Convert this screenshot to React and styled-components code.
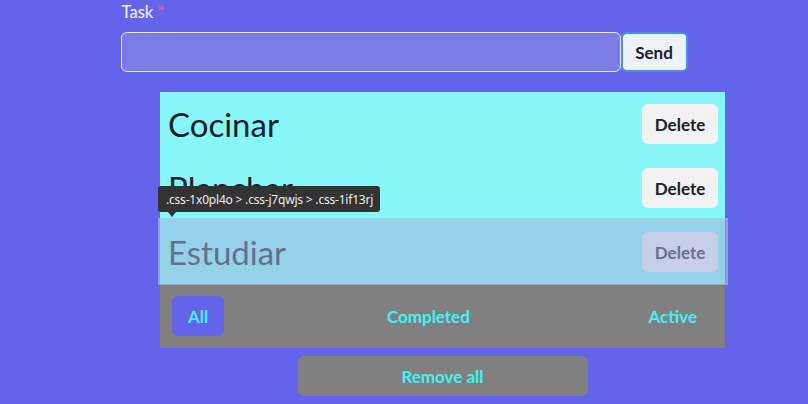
import React from "react";
import styled, { createGlobalStyle } from "styled-components";

const colors = {
  bg: "#6464ea",
  list: "#87f7f7",
  gray: "#808080",
  cyanText: "#40f4f4",
  dark: "#1a202c",
  light: "#f2f2f2"
};

const GlobalStyle = createGlobalStyle`
  html, body {
    margin: 0;
    padding: 0;
    background: ${colors.bg};
    font-family: Lato, "Open Sans", sans-serif;
  }
  #root {
    min-height: 404px;
  }
`;

const tasks = [
  { id: 1, name: "Cocinar" },
  { id: 2, name: "Planchar" },
  { id: 3, name: "Estudiar", inspected: true }
];

export default function App() {
  return (
    <>
      <GlobalStyle />
      <Page>
        <Form>
          <Label>
            Task <Required>*</Required>
          </Label>
          <InputRow>
            <TaskInput />
            <SendButton>Send</SendButton>
          </InputRow>
        </Form>
        <Section>
          <List>
            {tasks.map(task => (
              <Row key={task.id}>
                <TaskName>{task.name}</TaskName>
                <DeleteButton>Delete</DeleteButton>
                {task.inspected && (
                  <>
                    <Highlight />
                    <Tooltip>.css-1x0pl4o &gt; .css-j7qwjs &gt; .css-1if13rj</Tooltip>
                  </>
                )}
              </Row>
            ))}
          </List>
          <FilterBar>
            <FilterButton active>All</FilterButton>
            <FilterButton>Completed</FilterButton>
            <FilterButton>Active</FilterButton>
          </FilterBar>
          <RemoveAll>Remove all</RemoveAll>
        </Section>
      </Page>
    </>
  );
}

const Page = styled.div`
  display: flex;
  flex-direction: column;
  width: 808px;
  height: 404px;
  overflow: hidden;
`;

const Form = styled.div`
  width: 567px;
  margin: 0 auto;
  display: flex;
  flex-direction: column;
`;

const Label = styled.label`
  color: #eef0fb;
  font-size: 16.5px;
  font-weight: 500;
  line-height: 24px;
  padding-left: 1px;
  margin-bottom: 8px;
`;

const Required = styled.span`
  color: #f0609a;
`;

const InputRow = styled.div`
  display: flex;
  height: 40px;
`;

const TaskInput = styled.input`
  flex: 1;
  box-sizing: border-box;
  height: 40px;
  border: 1px solid #e6e8fa;
  border-radius: 6px;
  background: #7a7be4;
  outline: none;
`;

const SendButton = styled.button`
  box-sizing: border-box;
  width: 67px;
  height: 40px;
  border: 2px solid #4a8fe4;
  border-radius: 6px;
  background: #edf2f7;
  color: ${colors.dark};
  font-family: Lato, sans-serif;
  font-size: 17px;
  font-weight: 700;
  padding: 0;
`;

const Section = styled.div`
  width: 565px;
  padding-left: 160px;
  margin-top: 20px;
  display: flex;
  flex-direction: column;
`;

const List = styled.div`
  background: ${colors.list};
  display: flex;
  flex-direction: column;
`;

const Row = styled.div`
  position: relative;
  height: 64px;
  display: flex;
  align-items: center;
  justify-content: space-between;
  padding: 0 7px 0 8px;
`;

const TaskName = styled.span`
  font-size: 33px;
  font-weight: 400;
  color: ${colors.dark};
`;

const DeleteButton = styled.button`
  width: 76px;
  height: 40px;
  border: none;
  border-radius: 6px;
  background: ${colors.light};
  color: ${colors.dark};
  font-family: Lato, sans-serif;
  font-size: 17px;
  font-weight: 700;
  padding: 0;
`;

const Highlight = styled.div`
  position: absolute;
  top: -2px;
  bottom: -1px;
  left: -2px;
  right: -3px;
  background: rgba(160, 178, 222, 0.55);
  box-shadow: inset 0 0 0 2px rgba(190, 205, 235, 0.25);
`;

const Tooltip = styled.div`
  position: absolute;
  left: -2px;
  top: -34px;
  height: 26px;
  padding: 0 7px 0 8px;
  display: flex;
  align-items: center;
  background: #333333;
  color: #f0f0f0;
  border-radius: 3px;
  font-family: "Noto Sans", sans-serif;
  font-size: 12px;
  letter-spacing: -0.2px;
  white-space: nowrap;
  &::after {
    content: "";
    position: absolute;
    left: 10px;
    bottom: -5px;
    border-left: 4px solid transparent;
    border-right: 4px solid transparent;
    border-top: 5px solid #333333;
  }
`;

const FilterBar = styled.div`
  background: ${colors.gray};
  height: 64px;
  display: flex;
  align-items: center;
  justify-content: space-between;
  padding: 0 12px;
`;

const FilterButton = styled.button`
  height: 40px;
  padding: 0 16px;
  border: none;
  border-radius: 6px;
  background: ${p => (p.active ? colors.bg : "transparent")};
  color: ${colors.cyanText};
  font-family: Lato, sans-serif;
  font-size: 17px;
  font-weight: 700;
`;

const RemoveAll = styled.button`
  align-self: center;
  width: 290px;
  height: 40px;
  margin-top: 8px;
  border: none;
  border-radius: 6px;
  background: ${colors.gray};
  color: ${colors.cyanText};
  font-family: Lato, sans-serif;
  font-size: 17px;
  font-weight: 700;
`;
